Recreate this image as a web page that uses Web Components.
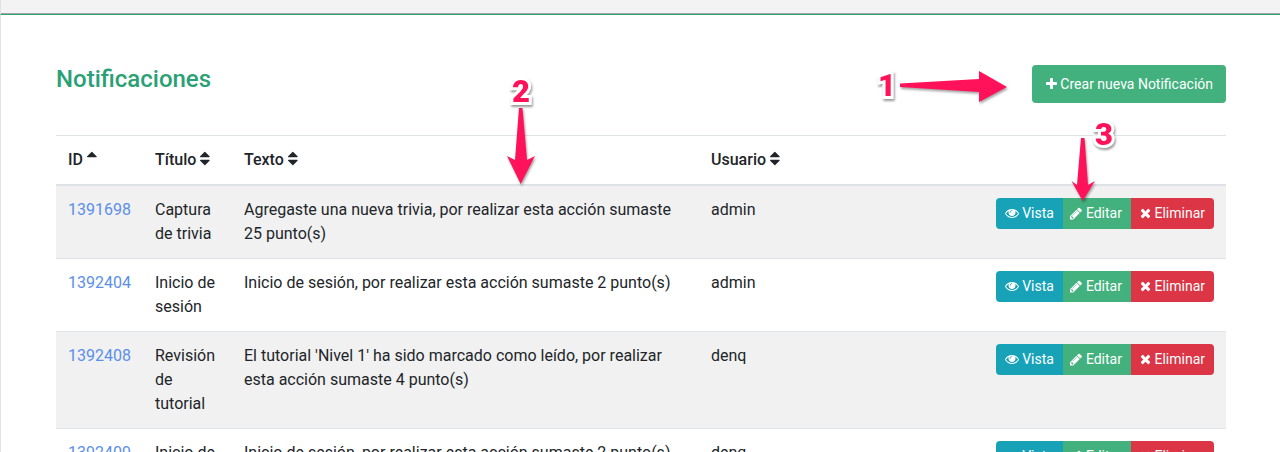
<!DOCTYPE html>
<html lang="es">
<head>
<meta charset="utf-8">
<title>Notificaciones</title>
<style>
  html, body { margin: 0; height: 452px; overflow: hidden; background: #fff; }
  body { font-family: Roboto, "Liberation Sans", sans-serif; font-size: 16px; line-height: 24px; color: #212529; position: relative; }
</style>
</head>
<body>
<app-topbar></app-topbar>
<app-panel>
  <panel-head>
    <span slot="title">Notificaciones</span>
    <app-btn slot="action" kind="green" icon="plus" big>Crear nueva Notificación</app-btn>
  </panel-head>
  <notif-header></notif-header>
  <notif-row code="1391698" titulo="Captura de trivia" usuario="admin" striped>Agregaste una nueva trivia, por realizar esta acción sumaste 25 punto(s)</notif-row>
  <notif-row code="1392404" titulo="Inicio de sesión" usuario="admin">Inicio de sesión, por realizar esta acción sumaste 2 punto(s)</notif-row>
  <notif-row code="1392408" titulo="Revisión de tutorial" usuario="denq" striped>El tutorial 'Nivel 1' ha sido marcado como leído, por realizar esta acción sumaste 4 punto(s)</notif-row>
  <notif-row code="1392409" titulo="Inicio de sesión" usuario="denq">Inicio de sesión, por realizar esta acción sumaste 2 punto(s)</notif-row>
</app-panel>
<note-layer></note-layer>

<script>
const ICONS = {
  plus: ['192 0 1408 1792', 'M1600 736v192q0 40-28 68t-68 28h-416v416q0 40-28 68t-68 28h-192q-40 0-68-28t-28-68v-416h-416q-40 0-68-28t-28-68v-192q0-40 28-68t68-28h416v-416q0-40 28-68t68-28h192q40 0 68 28t28 68v416h416q40 0 68 28t28 68z'],
  times: ['192 0 1408 1792', 'M1490 1322q0 40-28 68l-136 136q-28 28-68 28t-68-28l-294-294-294 294q-28 28-68 28t-68-28l-136-136q-28-28-28-68t28-68l294-294-294-294q-28-28-28-68t28-68l136-136q28-28 68-28t68 28l294 294 294-294q28-28 68-28t68 28l136 136q28 28 28 68t-28 68l-294 294 294 294q28 28 28 68z'],
  eye: ['0 0 1792 1792', 'M1664 960q-152-236-381-353 61 104 61 225 0 185-131.500 316.500t-316.500 131.500-316.500-131.500-131.500-316.500q0-121 61-225-229 117-381 353 133 205 333.500 326.500t434.500 121.500 434.500-121.500 333.500-326.500zm-720-384q0-20-14-34t-34-14q-125 0-214.500 89.500t-89.500 214.500q0 20 14 34t34 14 34-14 14-34q0-86 61-147t147-61q20 0 34-14t14-34zm848 384q0 34-20 69-140 230-376.500 368.500t-499.500 138.500-499.500-139-376.500-368q-20-35-20-69t20-69q140-229 376.500-368t499.500-139 499.500 139 376.500 368q20 35 20 69z'],
  pencil: ['128 0 1536 1792', 'M491 1536l91-91-235-235-91 91v107h128v128h107zm523-928q0-22-22-22-10 0-17 7l-542 542q-7 7-7 17 0 22 22 22 10 0 17-7l542-542q7-7 7-17zm-54-192l416 416-832 832h-416v-416zm683 96q0 53-37 90l-166 166-416-416 166-165q36-38 90-38 53 0 91 38l235 234q37 39 37 91z'],
  sort: ['384 0 1024 1792', 'M1408 1088q0 26-19 45l-448 448q-19 19-45 19t-45-19l-448-448q-19-19-19-45t19-45 45-19h896q26 0 45 19t19 45zm0-384q0 26-19 45t-45 19h-896q-26 0-45-19t-19-45 19-45l448-448q19-19 45-19t45 19l448 448q19 19 19 45z'],
  asc: ['384 0 1024 1792', 'M1408 704q0 26-19 45t-45 19h-896q-26 0-45-19t-19-45 19-45l448-448q19-19 45-19t45 19l448 448q19 19 19 45z']
};

class FaIcon extends HTMLElement {
  constructor() {
    super();
    const [box, d] = ICONS[this.getAttribute('name')];
    const w = box.split(' ')[2] / 1792;
    this.attachShadow({mode: 'open'}).innerHTML = `
      <style>
        :host { display: inline-block; vertical-align: -0.125em; line-height: 0; }
        :host([name="pencil"]) { margin-left: -1.5px; transform: translateY(.5px); }
        svg { display: block; width: ${w}em; height: 1em; fill: currentColor; }
      </style>
      <svg viewBox="${box}"><path d="${d}"/></svg>`;
  }
}

class AppTopbar extends HTMLElement {
  constructor() {
    super();
    this.attachShadow({mode: 'open'}).innerHTML = `
      <style>
        :host { display: block; height: 14px; background: #f3f3f3; border-left: 1px solid #e2e2e2; border-bottom: 1px solid #2fa173; box-shadow: inset 0 -1px 0 #a5a5a5; }
      </style>`;
  }
}

class AppPanel extends HTMLElement {
  constructor() {
    super();
    this.attachShadow({mode: 'open'}).innerHTML = `
      <style>
        :host { display: block; padding: 50px 54px 0 55px; border-left: 1px solid #e2e2e2; height: 437px; box-sizing: border-box; overflow: hidden; }
      </style>
      <slot></slot>`;
  }
}

class PanelHead extends HTMLElement {
  constructor() {
    super();
    this.attachShadow({mode: 'open'}).innerHTML = `
      <style>
        :host { display: flex; justify-content: space-between; align-items: flex-start; height: 38px; margin-bottom: 32px; }
        .title { font-size: 24px; font-weight: 500; line-height: 28px; color: #2aa175; }
      </style>
      <div class="title"><slot name="title"></slot></div>
      <slot name="action"></slot>`;
  }
}

class AppBtn extends HTMLElement {
  constructor() {
    super();
    const colors = {green: '#42b17e', teal: '#17a2b8', red: '#dc3545'};
    const big = this.hasAttribute('big');
    this.attachShadow({mode: 'open'}).innerHTML = `
      <style>
        :host { display: inline-block; box-sizing: border-box; color: #fff; white-space: nowrap; font-size: 14px; background: ${colors[this.getAttribute('kind')]};
          padding: ${big ? '7px 13px 7px 14px' : '5px 9px'}; line-height: ${big ? '24px' : '21px'}; border-radius: ${big ? '4px' : '0'}; }
      </style>
      <fa-icon name="${this.getAttribute('icon')}"></fa-icon> <slot></slot>`;
  }
}

class RowActions extends HTMLElement {
  constructor() {
    super();
    this.attachShadow({mode: 'open'}).innerHTML = `
      <style>
        :host { display: inline-flex; height: 31px; border-radius: 4px; overflow: hidden; }
      </style>
      <app-btn kind="teal" icon="eye">Vista</app-btn><app-btn kind="green" icon="pencil">Editar</app-btn><app-btn kind="red" icon="times">Eliminar</app-btn>`;
  }
}

const ROW_GRID = 'display: grid; grid-template-columns: 87px 89px 467px 1fr auto;';

class NotifHeader extends HTMLElement {
  constructor() {
    super();
    const th = (label, icon) => `<div>${label} <fa-icon name="${icon}"></fa-icon></div>`;
    this.attachShadow({mode: 'open'}).innerHTML = `
      <style>
        :host { ${ROW_GRID} border-top: 1px solid #dee2e6; border-bottom: 2px solid #dee2e6; font-weight: 500; }
        div { padding: 12px; }
        fa-icon { font-size: 17px; }
      </style>
      ${th('ID', 'asc')}${th('Título', 'sort')}${th('Texto', 'sort')}${th('Usuario', 'sort')}`;
  }
}

class NotifRow extends HTMLElement {
  constructor() {
    super();
    this.attachShadow({mode: 'open'}).innerHTML = `
      <style>
        :host { ${ROW_GRID} border-bottom: 1px solid #dee2e6; }
        :host([striped]) { background: #f1f1f1; }
        div { padding: 12px; }
        a { color: #5b8fe8; text-decoration: none; }
        .act { padding-bottom: 0; }
      </style>
      <div><a href="#">${this.getAttribute('code')}</a></div>
      <div>${this.getAttribute('titulo')}</div>
      <div><slot></slot></div>
      <div>${this.getAttribute('usuario')}</div>
      <div class="act"><row-actions></row-actions></div>`;
  }
}

class NoteLayer extends HTMLElement {
  constructor() {
    super();
    this.attachShadow({mode: 'open'}).innerHTML = `
      <style>
        :host { position: absolute; inset: 0; pointer-events: none; }
        svg { position: absolute; inset: 0; width: 1280px; height: 452px; filter: drop-shadow(1px 2px 1px rgba(0,0,0,.35)); }
        path { fill: #ff1259; }
        span { position: absolute; font: 900 31px/30px Roboto, "Liberation Sans", sans-serif; color: #ff1259; transform: translate(-50%, -50%);
          -webkit-text-stroke: 6px #fff; paint-order: stroke fill; filter: drop-shadow(1px 2px 1px rgba(0,0,0,.4)); }
      </style>
      <svg viewBox="0 0 1280 452">
        <path d="M900 83.500 L979 79 L979 71 L1007 87 L979 102 L979 92 L900 87 Z"/>
        <path d="M519 108 L522.500 108 L527 160 L535 156 L520.700 184 L507 156 L515 160 Z"/>
        <path d="M1081 138 L1084.500 138 L1088 185 L1095 181 L1082.700 201 L1071.500 181 L1077 185 Z"/>
      </svg>
      <span style="left:887px;top:86px">1</span>
      <span style="left:521px;top:92px">2</span>
      <span style="left:1104px;top:135px">3</span>`;
  }
}

customElements.define('fa-icon', FaIcon);
customElements.define('app-topbar', AppTopbar);
customElements.define('app-panel', AppPanel);
customElements.define('panel-head', PanelHead);
customElements.define('app-btn', AppBtn);
customElements.define('row-actions', RowActions);
customElements.define('notif-header', NotifHeader);
customElements.define('notif-row', NotifRow);
customElements.define('note-layer', NoteLayer);
</script>
</body>
</html>
